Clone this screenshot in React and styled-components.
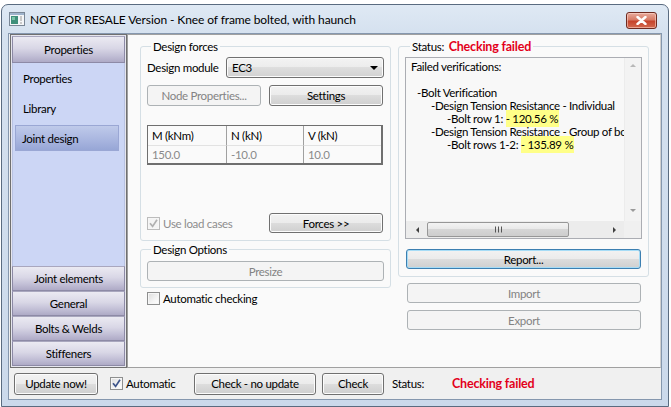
import React from 'react';
import styled, { createGlobalStyle } from 'styled-components';

const FONT = `Lato, "Noto Sans", "DejaVu Sans", sans-serif`;

const GlobalStyle = createGlobalStyle`
  * { box-sizing: border-box; }
  html, body { margin: 0; padding: 0; background: #ffffff; }
  body { font-family: ${FONT}; font-size: 11.5px; letter-spacing: -0.3px; color: #000; }
`;

const Window = styled.div`
  margin: 4px 0 0 1px;
  width: 668px;
  height: 403px;
  border: 1px solid #5a6b80;
  border-radius: 7px 7px 0 0;
  background: linear-gradient(to bottom, #dfe9f4 0px, #d5e1ef 28px, #cbd9eb 100%);
  padding: 0 6px 6px 6px;
  display: flex;
  flex-direction: column;
`;

const TitleBar = styled.div`
  height: 28px;
  display: flex;
  align-items: center;
  padding-left: 1px;
`;

const TitleText = styled.div`
  margin-left: 5px;
  font-size: 12px;
  letter-spacing: -0.1px;
  color: #000;
  flex: 1;
  white-space: nowrap;
`;

const CloseButton = styled.div`
  align-self: flex-start;
  margin-top: 7px;
  margin-right: 5px;
  width: 31px;
  height: 17px;
  border: 1px solid #6e2a20;
  border-radius: 3px;
  background: linear-gradient(to bottom, #e8ab9d 0%, #d77b66 45%, #c6442c 55%, #d36a4f 100%);
  box-shadow: inset 0 0 0 1px rgba(255, 220, 210, 0.55);
  display: flex;
  align-items: center;
  justify-content: center;
`;

const Client = styled.div`
  flex: 1;
  border: 1px solid #8597ae;
  background: #f0f0f0;
  display: flex;
  flex-direction: column;
`;

const TopArea = styled.div`
  height: 334px;
  display: flex;
  padding-left: 1px;
`;

const Nav = styled.div`
  width: 117px;
  border: 1px solid #707070;
  background: #e6e6ee;
  padding: 1px;
  display: flex;
  flex-direction: column;
`;

const NavButton = styled.div`
  height: ${p => p.$h}px;
  flex-shrink: 0;
  display: flex;
  align-items: center;
  justify-content: center;
  border: 1px solid #8d8aa6;
  border-top-color: #a9a7be;
  background: linear-gradient(to bottom, #ebeaf2 0%, #d9d7e6 45%, #c2bfd6 75%, #aeaac6 100%);
  color: #000;
`;

const NavPanel = styled.div`
  flex: 1;
  background: #ccd6f5;
  border-left: 1px solid #b8c2e2;
  border-right: 1px solid #b8c2e2;
  padding: 2px 5px 0 2px;
  display: flex;
  flex-direction: column;
  gap: 4px;
`;

const NavItem = styled.div`
  height: 26px;
  display: flex;
  align-items: center;
  padding-left: ${p => (p.$selected ? 6 : 7)}px;
  border: 1px solid ${p => (p.$selected ? '#9aa7d4' : 'transparent')};
  background: ${p => (p.$selected ? 'linear-gradient(to bottom, #bfcaea 0%, #aab7e0 55%, #97a6d6 100%)' : 'transparent')};
  color: #000;
`;

const Main = styled.div`
  flex: 1;
  background: #fafafa;
  border: 1px solid #a0a0a0;
  border-right-color: #d0d0d0;
  padding: 4px 10px 0 12px;
  display: grid;
  grid-template-columns: 251px 251px;
  column-gap: 7px;
  align-content: start;
`;

const Column = styled.div`
  display: flex;
  flex-direction: column;
`;

const Group = styled.fieldset`
  margin: ${p => p.$mt || 0}px 0 0 0;
  padding: ${p => p.$pt}px 6px ${p => p.$pb}px 6px;
  border: 1px solid #d5dfe5;
  border-radius: 3px;
  min-width: 0;
`;

const Legend = styled.legend`
  padding: 0 2px;
  margin-left: ${p => p.$ml || 4}px;
  line-height: 15px;
  color: #000;
  white-space: nowrap;
`;

const Failed = styled.span`
  color: #e3001b;
  font-weight: bold;
  font-size: 12.5px;
  letter-spacing: -0.2px;
  margin-left: ${p => p.$ml || 0}px;
`;

const GroupBody = styled.div`
  height: ${p => p.$h}px;
  display: flex;
  flex-direction: column;
`;

const Row = styled.div`
  display: flex;
  align-items: center;
  gap: ${p => p.$gap || 0}px;
  margin-top: ${p => p.$mt || 0}px;
  height: ${p => p.$h || 20}px;
`;

const Label = styled.div`
  width: ${p => p.$w}px;
  flex-shrink: 0;
  white-space: nowrap;
  color: ${p => (p.$disabled ? '#8d8d8d' : '#000')};
`;

const Select = styled.div`
  width: 158px;
  height: 21px;
  border: 1px solid #707070;
  border-radius: 3px;
  background: linear-gradient(to bottom, #f3f3f3 0%, #ececec 50%, #dedede 50%, #d1d1d1 100%);
  box-shadow: inset 0 0 0 1px #fbfbfb;
  display: flex;
  align-items: center;
  justify-content: space-between;
  padding: 0 5px 0 5px;
`;

const Button = styled.div`
  width: ${p => (p.$w ? `${p.$w}px` : 'auto')};
  height: ${p => p.$h || 20}px;
  margin: ${p => p.$m || '0'};
  flex-shrink: 0;
  display: flex;
  align-items: center;
  justify-content: center;
  border: 1px solid ${p => (p.$disabled ? '#adb2b5' : p.$focus ? '#3c7fb1' : '#707070')};
  border-radius: 3px;
  background: ${p =>
    p.$disabled
      ? '#f4f4f4'
      : 'linear-gradient(to bottom, #f2f2f2 0%, #ebebeb 50%, #dddddd 50%, #cfcfcf 100%)'};
  box-shadow: ${p =>
    p.$disabled ? 'none' : p.$focus ? 'inset 0 0 0 1px #a6dcf6' : 'inset 0 0 0 1px #fcfcfc'};
  color: ${p => (p.$disabled ? '#838383' : '#000')};
  white-space: nowrap;
`;

const Table = styled.div`
  margin-top: 19px;
  width: 236px;
  border: 1px solid #6f6f6f;
  border-right-width: 2px;
  border-bottom-width: 2px;
  display: grid;
  grid-template-columns: 79px 77px 1fr;
  background: #fafafa;
`;

const Cell = styled.div`
  height: ${p => (p.$head ? 20 : 17)}px;
  display: flex;
  align-items: center;
  padding-left: 4px;
  border-right: ${p => (p.$last ? 'none' : '1px solid #a0a0a0')};
  border-bottom: ${p => (p.$head ? '1px solid #e2e2e2' : 'none')};
  color: ${p => (p.$head ? '#000' : '#8a8a8a')};
`;

const Spacer = styled.div`
  flex: 1;
`;

const CheckWrap = styled.div`
  display: flex;
  align-items: center;
  gap: 3px;
  width: ${p => (p.$w ? `${p.$w}px` : 'auto')};
  margin-left: ${p => p.$ml || 0}px;
  flex-shrink: 0;
  color: ${p => (p.$disabled ? '#8d8d8d' : '#000')};
  white-space: nowrap;
`;

const Box = styled.span`
  width: 13px;
  height: 13px;
  flex-shrink: 0;
  border: 1px solid ${p => (p.$disabled ? '#bcbcbc' : '#8e8f8f')};
  background: ${p =>
    p.$disabled ? '#f4f4f4' : 'linear-gradient(135deg, #dcdcdc 0%, #f4f4f4 60%, #ffffff 100%)'};
  box-shadow: inset 0 0 0 1px #f6f6f6;
  display: flex;
  align-items: center;
  justify-content: center;
`;

const TextBox = styled.div`
  height: 182px;
  border: 1px solid #abadb3;
  background: #f8f8f8;
  display: grid;
  grid-template-columns: 1fr 17px;
  grid-template-rows: 1fr 17px;
`;

const TextContent = styled.div`
  overflow: hidden;
  padding: 2px 0 0 5px;
  white-space: pre;
  line-height: 13px;
`;

const Line = styled.div`
  height: 13px;
  padding-left: ${p => p.$indent || 0}px;
`;

const Hl = styled.span`
  background: #ffff88;
  padding: 2px 1px 2px 0;
`;

const VScroll = styled.div`
  background: #f3f3f3;
  border-left: 1px solid #ececec;
  display: flex;
  flex-direction: column;
  justify-content: space-between;
  align-items: center;
  padding: 6px 0 9px;
`;

const HScroll = styled.div`
  background: #ececec;
  display: flex;
  align-items: center;
  padding: 0 4px 0 5px;
`;

const ArrowBtn = styled.div`
  width: ${p => p.$w}px;
  display: flex;
  justify-content: center;
  align-items: center;
  flex-shrink: 0;
`;

const Thumb = styled.div`
  width: 142px;
  height: 15px;
  margin-left: 4px;
  border: 1px solid #979797;
  border-radius: 2px;
  background: linear-gradient(to bottom, #f3f3f3 0%, #e8e8e8 50%, #d6d6d6 50%, #cdcdcd 100%);
  display: flex;
  align-items: center;
  justify-content: center;
`;

const Corner = styled.div`
  background: #f0f0f0;
`;

const BottomBar = styled.div`
  flex: 1;
  display: flex;
  align-items: center;
  padding-left: 5px;
`;

const StatusLabel = styled.div`
  width: 60px;
  margin-left: 8px;
  flex-shrink: 0;
`;

const Grip = () => (
  <svg width="7" height="7" viewBox="0 0 7 7">
    <path d="M0.5 0.5V6.5M3.5 0.5V6.5M6.5 0.5V6.5" stroke="#555" strokeWidth="1" />
  </svg>
);

const Tri = ({ dir, color = '#000', s = 4 }) => {
  const d = {
    up: `M0 ${s} L${s} 0 L${2 * s} ${s} Z`,
    down: `M0 0 L${2 * s} 0 L${s} ${s} Z`,
    left: `M${s} 0 L${s} ${2 * s} L0 ${s} Z`,
    right: `M0 0 L${s} ${s} L0 ${2 * s} Z`,
  }[dir];
  const w = dir === 'up' || dir === 'down' ? 2 * s : s;
  const h = dir === 'up' || dir === 'down' ? s : 2 * s;
  return (
    <svg width={w} height={h} viewBox={`0 0 ${w} ${h}`}>
      <path d={d} fill={color} />
    </svg>
  );
};

const Check = ({ checked, disabled }) => (
  <Box $disabled={disabled}>
    {checked && (
      <svg width="9" height="9" viewBox="0 0 9 9">
        <path
          d="M1 4.2 L3.6 7.4 L8 0.8"
          fill="none"
          stroke={disabled ? '#b0b0b0' : '#3d548a'}
          strokeWidth="1.7"
        />
      </svg>
    )}
  </Box>
);

const AppIcon = () => (
  <svg width="16" height="14" viewBox="0 0 16 14">
    <rect x="0.5" y="0.5" width="15" height="13" fill="#f4f6f8" stroke="#7a8796" />
    <rect x="1" y="1" width="14" height="2" fill="#9fb4cc" />
    <rect x="2" y="4" width="7" height="8" fill="#3f8f7a" />
    <rect x="3" y="5" width="3" height="3" fill="#7cc4a8" />
    <rect x="11" y="4" width="2" height="5" fill="#c9c9c9" />
    <rect x="11" y="10" width="2" height="2" fill="#c9c9c9" />
  </svg>
);

export default function App() {
  return (
    <>
      <GlobalStyle />
      <Window>
        <TitleBar>
          <AppIcon />
          <TitleText>NOT FOR RESALE Version - Knee of frame bolted, with haunch</TitleText>
          <CloseButton>
            <svg width="11" height="9" viewBox="0 0 11 9">
              <path d="M1.5 1 L9.5 8 M9.5 1 L1.5 8" stroke="#ffffff" strokeWidth="2.4" strokeLinecap="round" />
            </svg>
          </CloseButton>
        </TitleBar>
        <Client>
          <TopArea>
            <Nav>
              <NavButton $h={27}>Properties</NavButton>
              <NavPanel>
                <NavItem>Properties</NavItem>
                <NavItem>Library</NavItem>
                <NavItem $selected>Joint design</NavItem>
              </NavPanel>
              <NavButton $h={25}>Joint elements</NavButton>
              <NavButton $h={25}>General</NavButton>
              <NavButton $h={25}>Bolts &amp; Welds</NavButton>
              <NavButton $h={25}>Stiffeners</NavButton>
            </Nav>
            <Main>
              <Column>
                <Group $pt={3} $pb={7}>
                  <Legend>Design forces</Legend>
                  <GroupBody $h={176}>
                    <Row $h={21}>
                      <Label $w={79}>Design module</Label>
                      <Select>
                        <span>EC3</span>
                        <Tri dir="down" s={4} />
                      </Select>
                    </Row>
                    <Row $mt={7} $h={21} $gap={8}>
                      <Button $w={114} $h={21} $disabled>Node Properties...</Button>
                      <Button $w={114} $h={21}>Settings</Button>
                    </Row>
                    <Table>
                      <Cell $head>M (kNm)</Cell>
                      <Cell $head>N (kN)</Cell>
                      <Cell $head $last>V (kN)</Cell>
                      <Cell>150.0</Cell>
                      <Cell>-10.0</Cell>
                      <Cell $last>10.0</Cell>
                    </Table>
                    <Spacer />
                    <Row $h={20}>
                      <CheckWrap $w={122} $disabled>
                        <Check checked disabled />
                        Use load cases
                      </CheckWrap>
                      <Button $w={114} $h={20}>Forces &gt;&gt;</Button>
                    </Row>
                  </GroupBody>
                </Group>
                <Group $mt={1} $pt={4} $pb={6}>
                  <Legend>Design Options</Legend>
                  <Button $h={20} $disabled>Presize</Button>
                </Group>
                <Row $mt={2} $h={16}>
                  <CheckWrap $ml={7}>
                    <Check />
                    Automatic checking
                  </CheckWrap>
                </Row>
              </Column>
              <Column>
                <Group $pt={3} $pb={7}>
                  <Legend $ml={5}>
                    Status: <Failed $ml={2}>Checking failed</Failed>
                  </Legend>
                  <TextBox>
                    <TextContent>
                      <Line>Failed verifications:</Line>
                      <Line> </Line>
                      <Line $indent={6}>-Bolt Verification</Line>
                      <Line $indent={20}>-Design Tension Resistance - Individual</Line>
                      <Line $indent={36}>-Bolt row 1: <Hl>- 120.56 %</Hl></Line>
                      <Line $indent={20}>-Design Tension Resistance - Group of bolt rows</Line>
                      <Line $indent={36}>-Bolt rows 1-2: <Hl>- 135.89 %</Hl></Line>
                    </TextContent>
                    <VScroll>
                      <Tri dir="up" s={3} color="#b8b8b8" />
                      <Tri dir="down" s={3} color="#9a9a9a" />
                    </VScroll>
                    <HScroll>
                      <ArrowBtn $w={12}><Tri dir="left" s={3} color="#404040" /></ArrowBtn>
                      <Thumb><Grip /></Thumb>
                      <Spacer />
                      <ArrowBtn $w={12}><Tri dir="right" s={3} color="#404040" /></ArrowBtn>
                    </HScroll>
                    <Corner />
                  </TextBox>
                  <Button $h={20} $m="10px 1px 0" $focus>Report...</Button>
                </Group>
                <Button $h={20} $m="6px 8px 0 9px" $disabled>Import</Button>
                <Button $h={20} $m="7px 8px 0 9px" $disabled>Export</Button>
              </Column>
            </Main>
          </TopArea>
          <BottomBar>
            <Button $w={84} $h={22}>Update now!</Button>
            <CheckWrap $w={84} $ml={12}>
              <Check checked />
              Automatic
            </CheckWrap>
            <Button $w={122} $h={22}>Check - no update</Button>
            <Button $w={62} $h={22} $m="0 0 0 6px">Check</Button>
            <StatusLabel>Status:</StatusLabel>
            <Failed>Checking failed</Failed>
          </BottomBar>
        </Client>
      </Window>
    </>
  );
}
